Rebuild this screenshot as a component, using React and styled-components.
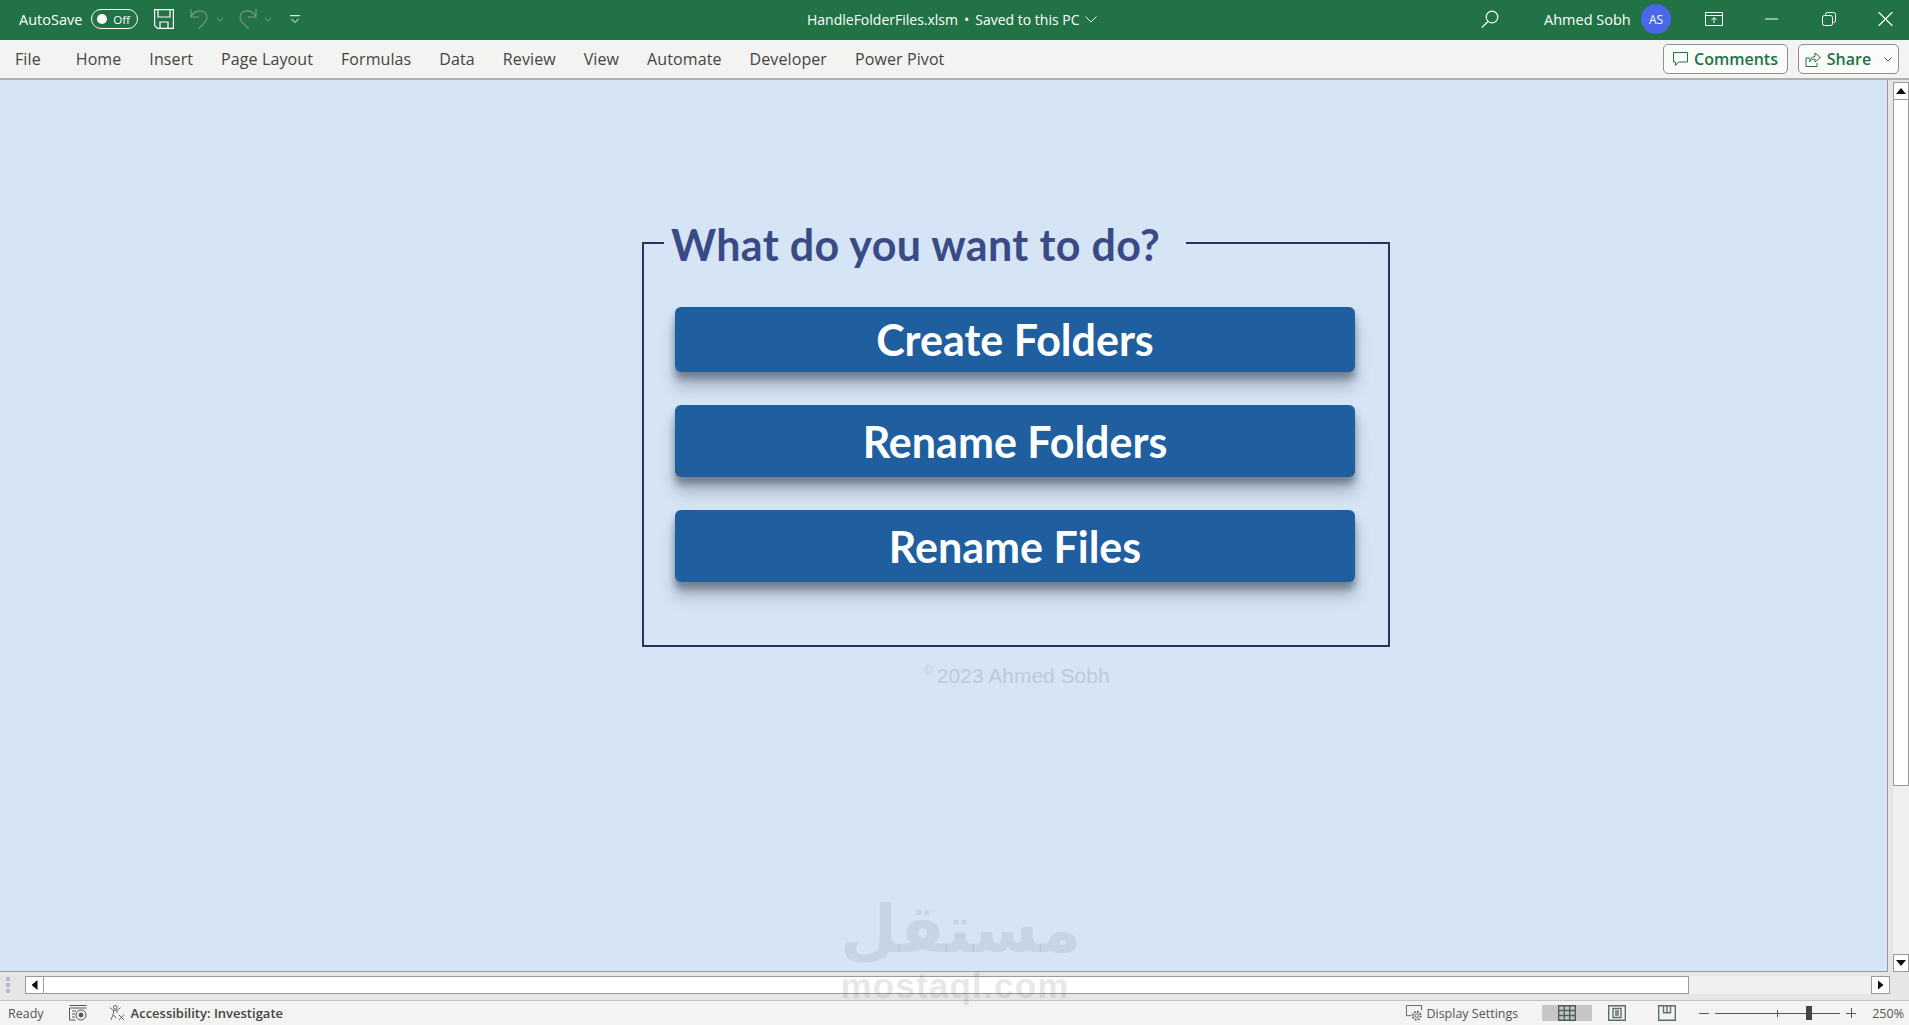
import React from 'react';
import styled, { createGlobalStyle } from 'styled-components';

const GlobalStyle = createGlobalStyle`
  html, body {
    margin: 0;
    height: 100%;
    overflow: hidden;
    background: #d5e5f5;
    font-family: "Open Sans", "Noto Sans", "Liberation Sans", sans-serif;
  }
  #root {
    height: 100%;
  }
`;

const TABS = ['Home', 'Insert', 'Page Layout', 'Formulas', 'Data', 'Review', 'View', 'Automate', 'Developer', 'Power Pivot'];
const ACTIONS = ['Create Folders', 'Rename Folders', 'Rename Files'];

function App() {
  return (
    <Page>
      <GlobalStyle />
      <TitleBar>
        <AutoSaveLabel>AutoSave</AutoSaveLabel>
        <Toggle>
          <ToggleDot />
          Off
        </Toggle>
        <SaveIcon viewBox="0 0 20 20" fill="none" stroke="#fff" strokeWidth="1.2">
          <path d="M.6.6h18.800v18.800H3.500L.6 16.500z" />
          <path d="M4 .6v7.400h12V.6M6 19.400V13h8v6.400" />
        </SaveIcon>
        <QuickIcon viewBox="0 0 18 20" fill="none" stroke="#7d9a8a" strokeWidth="1.1">
          <path d="M1 0v8h8M1 8c2-4 6-6.500 10-6 4 .5 6 3.500 6 7 0 3-3 5.500-8.500 10.500" />
        </QuickIcon>
        <SmallChevron viewBox="0 0 8 5" $left={8}>
          <path d="M1 1l3 3 3-3" fill="none" stroke="#7d9a8a" />
        </SmallChevron>
        <QuickIcon viewBox="0 0 18 20" fill="none" stroke="#7d9a8a" strokeWidth="1.1" $left={15}>
          <path d="M17 0v8H9M17 8c-2-4-6-6.500-10-6-4 .5-6 3.500-6 7 0 3 3 5.500 8.500 10.500" />
        </QuickIcon>
        <SmallChevron viewBox="0 0 8 5" $left={7}>
          <path d="M1 1l3 3 3-3" fill="none" stroke="#7d9a8a" />
        </SmallChevron>
        <CustomizeIcon viewBox="0 0 10 9" fill="none" stroke="#fff">
          <path d="M0 .7h10M1.500 4L5 7.500 8.500 4" />
        </CustomizeIcon>
        <FileName>
          HandleFolderFiles.xlsm<Dot>•</Dot>Saved to this PC
          <NameChevron viewBox="0 0 12 7" fill="none" stroke="#fff">
            <path d="M.5.5l5.500 5.500L11.500.5" />
          </NameChevron>
        </FileName>
        <SearchIcon viewBox="0 0 18 18" fill="none" stroke="#fff" strokeWidth="1.2">
          <circle cx="11" cy="7" r="5.800" />
          <path d="M7 11.500L.8 17.500" />
        </SearchIcon>
        <UserName>Ahmed Sobh</UserName>
        <Avatar>AS</Avatar>
        <WindowIcon viewBox="0 0 18 14" fill="none" stroke="#fff" $left={34} $width={18}>
          <path d="M.5.5h17v13H.5zM.5 3.500h17M9 11V6M6.500 8L9 5.500 11.500 8" />
        </WindowIcon>
        <WindowIcon viewBox="0 0 13 2" fill="none" stroke="#fff" $left={42} $width={13}>
          <path d="M0 1h13" />
        </WindowIcon>
        <WindowIcon viewBox="0 0 14 14" fill="none" stroke="#fff" $left={44} $width={14}>
          <path d="M3.500 3.500v-1a2 2 0 0 1 2-2h6a2 2 0 0 1 2 2v6a2 2 0 0 1-2 2h-1" />
          <rect x=".5" y="3.500" width="10" height="10" rx="2" />
        </WindowIcon>
        <WindowIcon viewBox="0 0 15 14" fill="none" stroke="#fff" strokeWidth="1.2" $left={42} $width={15}>
          <path d="M.5 0l14 14M14.500 0L.5 14" />
        </WindowIcon>
      </TitleBar>

      <Ribbon>
        <FileTab>File</FileTab>
        {TABS.map((tab) => (
          <Tab key={tab}>{tab}</Tab>
        ))}
        <RibbonRight>
          <OutlineButton $width={125}>
            <svg width="15" height="14" viewBox="0 0 15 14" fill="none" stroke="#217346">
              <path d="M.5.5h14v9.500H5.500l-3 3.500v-3.500h-2z" />
            </svg>
            Comments
          </OutlineButton>
          <OutlineButton $width={101}>
            <svg width="16" height="16" viewBox="0 0 16 16" fill="none" stroke="#217346">
              <path d="M1 7v8.500h11V12M1 7h4M4.500 11c0-3 2.500-5.500 5.500-5.500V2l5.500 4.500L10 11V8c-2.500 0-4.500 1-5.500 3z" />
            </svg>
            Share
            <ShareChevron viewBox="0 0 8 5" fill="none" stroke="#217346">
              <path d="M.5.5L4 4 7.500.5" />
            </ShareChevron>
          </OutlineButton>
        </RibbonRight>
      </Ribbon>

      <Workspace>
        <Sheet>
          <Frame>
            <FrameTitle>What do you want to do?</FrameTitle>
            {ACTIONS.map((label, i) => (
              <ActionButton key={label} $height={i === 0 ? 65 : 72}>
                {label}
              </ActionButton>
            ))}
          </Frame>
          <Copyright>
            <sup>©</sup>2023 Ahmed Sobh
          </Copyright>
        </Sheet>
        <VScroll>
          <ScrollButton $dir="up" />
          <VThumb />
          <VTrack />
          <ScrollButton $dir="down" />
        </VScroll>
      </Workspace>

      <HScrollRow>
        <Grip>
          <i />
          <i />
          <i />
        </Grip>
        <ScrollButton $dir="left" />
        <HThumb />
        <HTrack />
        <ScrollButton $dir="right" />
      </HScrollRow>

      <StatusBar>
        <StatusText>Ready</StatusText>
        <StatusIcon viewBox="0 0 18 16" fill="none" stroke="#555" $left={25}>
          <path d="M.5.5h17M.5 3h17M.5 3v12h6M3 6h4M3 9h3M3 12h3" />
          <circle cx="12" cy="10" r="5" />
          <circle cx="12" cy="10" r="2" fill="#555" />
        </StatusIcon>
        <StatusIcon viewBox="0 0 18 18" fill="none" stroke="#555" $left={21}>
          <circle cx="7" cy="2.500" r="2" />
          <path d="M1 3l4 3h4l4-3M5 6v4L2 17M9 6v3M11 11l6 6M17 11l-6 6M5 11l3 4" />
        </StatusIcon>
        <AccessText>Accessibility: Investigate</AccessText>
        <StatusRight>
          <StatusIcon viewBox="0 0 18 18" fill="none" stroke="#555" $left={0}>
            <path d="M6 12H.5V.5h17V6" />
            <circle cx="12" cy="12" r="2" />
            <circle cx="12" cy="12" r="4.500" strokeDasharray="2 1.500" strokeWidth="2" />
          </StatusIcon>
          <StatusText $left={3}>Display Settings</StatusText>
          <ViewCell $active>
            <svg width="18" height="16" viewBox="0 0 18 16" fill="none" stroke="#4f5f56" strokeWidth="1.4">
              <path d="M.7.7h16.600v14.600H.7zM6.300.7v14.600M11.700.7v14.600M.7 5.500h16.600M.7 10.500h16.600" />
            </svg>
          </ViewCell>
          <ViewCell>
            <svg width="18" height="16" viewBox="0 0 18 16" fill="none" stroke="#5f6f66" strokeWidth="1.4">
              <path d="M.7.7h16.600v14.600H.7zM5 3.500h8v9H5zM7 6h4M7 8h4M7 10h4" />
            </svg>
          </ViewCell>
          <ViewCell>
            <svg width="18" height="16" viewBox="0 0 18 16" fill="none" stroke="#5f6f66" strokeWidth="1.4">
              <path d="M.7.7h16.600v14.600H.7zM5.500.7v7h7v-7M9 .7v7" />
            </svg>
          </ViewCell>
          <ZoomMinus />
          <ZoomTrack>
            <ZoomThumb />
          </ZoomTrack>
          <ZoomPlus />
          <ZoomValue>250%</ZoomValue>
        </StatusRight>
      </StatusBar>

      <Watermark aria-hidden="true">
        <WatermarkLogo>مستقل</WatermarkLogo>
        <WatermarkUrl>mostaql.com</WatermarkUrl>
      </Watermark>
    </Page>
  );
}

export default App;

const Page = styled.div`
  position: relative;
  display: flex;
  flex-direction: column;
  height: 100%;
`;

const TitleBar = styled.header`
  box-sizing: border-box;
  display: flex;
  align-items: center;
  flex: 0 0 40px;
  padding: 0 0 2px 19px;
  background: #217346;
  color: #fff;
  font-size: 14.5px;
`;
const AutoSaveLabel = styled.span`
  width: 72px;
`;
const Toggle = styled.span`
  box-sizing: border-box;
  display: flex;
  align-items: center;
  justify-content: space-between;
  width: 47px;
  height: 20px;
  padding: 0 7px 0 5px;
  border: 1px solid #fff;
  border-radius: 10px;
  font-size: 11.5px;
`;
const ToggleDot = styled.i`
  width: 10px;
  height: 10px;
  border-radius: 50%;
  background: #fff;
`;
const SaveIcon = styled.svg`
  width: 20px;
  height: 20px;
  margin-left: 16px;
`;
const QuickIcon = styled.svg`
  width: 18px;
  height: 20px;
  margin-left: ${(p) => p.$left ?? 16}px;
`;
const SmallChevron = styled.svg`
  width: 8px;
  height: 5px;
  margin-left: ${(p) => p.$left}px;
`;
const CustomizeIcon = styled.svg`
  width: 10px;
  height: 9px;
  margin-left: 18px;
`;
const FileName = styled.div`
  display: flex;
  align-items: center;
  margin-left: 507px;
  width: 293px;
  font-size: 14px;
  white-space: nowrap;
`;
const Dot = styled.span`
  margin: 0 6px;
`;
const NameChevron = styled.svg`
  width: 12px;
  height: 7px;
  margin-left: 6px;
`;
const SearchIcon = styled.svg`
  width: 18px;
  height: 18px;
  margin-left: 381px;
`;
const UserName = styled.span`
  width: 86px;
  margin-left: 45px;
  white-space: nowrap;
`;
const Avatar = styled.span`
  display: flex;
  align-items: center;
  justify-content: center;
  width: 30px;
  height: 30px;
  margin-left: 11px;
  border-radius: 50%;
  background: #4a67e8;
  font-size: 12px;
`;
const WindowIcon = styled.svg`
  flex: none;
  width: ${(p) => p.$width}px;
  margin-left: ${(p) => p.$left}px;
`;

const Ribbon = styled.nav`
  box-sizing: border-box;
  display: flex;
  align-items: center;
  flex: 0 0 40px;
  padding: 0 10px 0 15px;
  background: #f3f3f1;
  border-bottom: 2px solid #b0b0ae;
`;
const Tab = styled.span`
  margin-right: 28px;
  color: #444;
  font-size: 16px;
  letter-spacing: 0.1px;
  white-space: nowrap;
`;
const FileTab = styled(Tab)`
  margin-right: 35px;
`;
const RibbonRight = styled.div`
  display: flex;
  gap: 10px;
  margin-left: auto;
`;
const OutlineButton = styled.span`
  box-sizing: border-box;
  display: flex;
  align-items: center;
  justify-content: center;
  gap: 6px;
  width: ${(p) => p.$width}px;
  height: 30px;
  background: #fbfbfa;
  border: 1px solid #8f8f8f;
  border-radius: 5px;
  color: #217346;
  font-size: 16px;
  font-weight: 600;
`;
const ShareChevron = styled.svg`
  width: 8px;
  height: 5px;
  margin-left: 7px;
`;

const Workspace = styled.main`
  display: flex;
  flex: 1;
  min-height: 0;
`;
const Sheet = styled.section`
  flex: 1;
  padding: 139px 0 0 642px;
  background: #d5e5f5;
  border-right: 1px solid #9a9a9a;
  border-bottom: 1px solid #9a9a9a;
`;
const Frame = styled.fieldset`
  box-sizing: border-box;
  display: flex;
  flex-direction: column;
  gap: 33px;
  width: 748px;
  margin: 0;
  padding: 40px 33px 63px 31px;
  border: 2px solid #24345f;
`;
const FrameTitle = styled.legend`
  box-sizing: border-box;
  width: 522px;
  margin-left: -11px;
  padding: 4px 0 0 7px;
  color: #3a4a85;
  font-family: Lato, "Liberation Sans", sans-serif;
  font-size: 43px;
  font-weight: 700;
  letter-spacing: 0.35px;
  line-height: 44px;
  white-space: nowrap;
`;
const ActionButton = styled.button`
  height: ${(p) => p.$height}px;
  padding: 0;
  background: #1f5f9f;
  border: none;
  border-radius: 6px;
  box-shadow: 0 7px 7px rgba(40, 50, 65, 0.42), 0 15px 16px rgba(60, 75, 95, 0.3);
  color: #fff;
  font-family: Lato, "Liberation Sans", sans-serif;
  font-size: 43px;
  font-weight: 700;
`;
const Copyright = styled.div`
  box-sizing: border-box;
  width: 748px;
  margin-top: 17px;
  padding-left: 282px;
  color: #bccadb;
  font-family: "Liberation Sans", Arial, sans-serif;
  font-size: 21px;
  line-height: 24px;
  sup {
    margin-right: 4px;
    font-size: 12px;
    line-height: 0;
  }
`;

const VScroll = styled.aside`
  box-sizing: border-box;
  display: flex;
  flex-direction: column;
  flex: 0 0 21px;
  padding: 2px 0 0 5px;
  background: #e6e6e6;
`;
const arrowShapes = {
  up: { w: 10, h: 6, clip: 'polygon(50% 0, 100% 100%, 0 100%)' },
  down: { w: 10, h: 6, clip: 'polygon(0 0, 100% 0, 50% 100%)' },
  left: { w: 6, h: 10, clip: 'polygon(100% 0, 100% 100%, 0 50%)' },
  right: { w: 6, h: 10, clip: 'polygon(0 0, 100% 50%, 0 100%)' },
};
const ScrollButton = styled.span`
  box-sizing: border-box;
  display: flex;
  align-items: center;
  justify-content: center;
  flex: none;
  width: ${(p) => (p.$dir === 'left' || p.$dir === 'right' ? 19 : 16)}px;
  height: 18px;
  background: #fff;
  border: 1px solid #9a9a9a;
  &::before {
    content: '';
    width: ${(p) => arrowShapes[p.$dir].w}px;
    height: ${(p) => arrowShapes[p.$dir].h}px;
    background: #111;
    clip-path: ${(p) => arrowShapes[p.$dir].clip};
  }
`;
const VThumb = styled.div`
  box-sizing: border-box;
  flex: 0 0 686px;
  width: 16px;
  background: #fff;
  border: 1px solid #9a9a9a;
  border-top: none;
`;
const VTrack = styled.div`
  flex: 1;
  background: #f0f0f0;
`;

const HScrollRow = styled.div`
  box-sizing: border-box;
  display: flex;
  align-items: center;
  flex: 0 0 29px;
  padding: 0 0 2px 6px;
  background: #e6e6e6;
  border-bottom: 1px solid #c4c4c4;
`;
const Grip = styled.div`
  display: flex;
  flex-direction: column;
  justify-content: space-between;
  width: 4px;
  height: 16px;
  margin-right: 15px;
  i {
    display: block;
    width: 4px;
    height: 4px;
    background: #b6bcc2;
  }
`;
const HThumb = styled.div`
  box-sizing: border-box;
  flex: 0 0 1645px;
  height: 18px;
  background: #fff;
  border: 1px solid #9a9a9a;
  border-left: none;
`;
const HTrack = styled.div`
  flex: 0 0 182px;
  height: 18px;
  background: #f0f0f0;
`;

const StatusBar = styled.footer`
  box-sizing: border-box;
  display: flex;
  align-items: center;
  flex: 0 0 24px;
  padding-left: 8px;
  background: #f3f3f1;
  color: #555;
  font-size: 12.5px;
`;
const StatusText = styled.span`
  margin-left: ${(p) => p.$left ?? 0}px;
  white-space: nowrap;
`;
const StatusIcon = styled.svg`
  flex: none;
  width: 18px;
  height: 16px;
  margin-left: ${(p) => p.$left}px;
`;
const AccessText = styled.span`
  margin-left: 5px;
  color: #444;
  font-size: 13px;
  font-weight: 600;
`;
const StatusRight = styled.div`
  display: flex;
  align-items: center;
  align-self: stretch;
  margin-left: auto;
  padding-right: 5px;
`;
const ViewCell = styled.span`
  display: flex;
  align-items: center;
  justify-content: center;
  width: 50px;
  margin-left: ${(p) => (p.$active ? 24 : 0)}px;
  background: ${(p) => (p.$active ? '#c6c6c6' : 'transparent')};
`;
const ZoomMinus = styled.i`
  width: 10px;
  height: 1px;
  margin-left: 7px;
  background: #555;
`;
const ZoomTrack = styled.span`
  position: relative;
  width: 125px;
  height: 1px;
  margin-left: 6px;
  background: #555;
  &::before {
    content: '';
    position: absolute;
    left: 62px;
    top: -3px;
    width: 1px;
    height: 7px;
    background: #555;
  }
`;
const ZoomThumb = styled.i`
  position: absolute;
  left: 91px;
  top: -7px;
  width: 6px;
  height: 14px;
  background: #444;
`;
const ZoomPlus = styled.i`
  position: relative;
  width: 10px;
  height: 1px;
  margin-left: 6px;
  background: #555;
  &::after {
    content: '';
    position: absolute;
    left: 4.5px;
    top: -4.5px;
    width: 1px;
    height: 10px;
    background: #555;
  }
`;
const ZoomValue = styled.span`
  margin-left: 16px;
`;

const Watermark = styled.div`
  position: absolute;
  left: 840px;
  top: 892px;
  width: 230px;
  text-align: center;
  pointer-events: none;
`;
const WatermarkLogo = styled.div`
  padding-right: 12px;
  color: rgba(110, 110, 110, 0.13);
  font-family: "DejaVu Sans", sans-serif;
  font-size: 66px;
  font-weight: 700;
  line-height: 76px;
`;
const WatermarkUrl = styled.div`
  color: rgba(110, 110, 110, 0.17);
  font-family: "Liberation Sans", Arial, sans-serif;
  font-size: 35px;
  font-weight: 700;
  letter-spacing: 1.2px;
  line-height: 36px;
`;
